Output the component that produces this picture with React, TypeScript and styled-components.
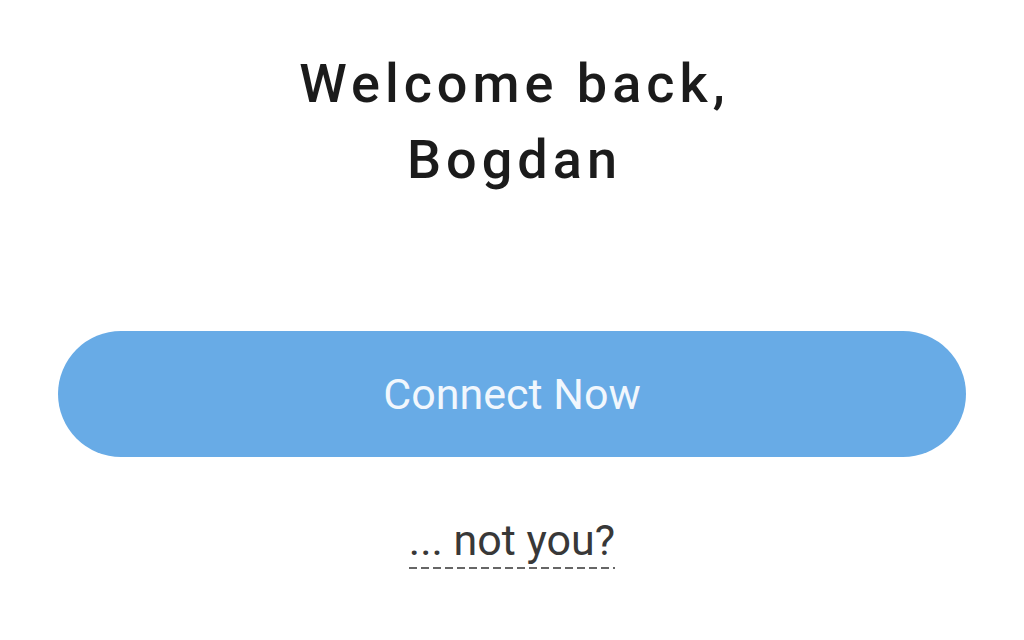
import React from "react";
import styled, { createGlobalStyle } from "styled-components";

const Global = createGlobalStyle`
  html, body { margin: 0; padding: 0; background: #ffffff; }
  body { font-family: Roboto, "Noto Sans", sans-serif; }
`;

const Page = styled.main`
  width: 1024px;
  height: 640px;
  display: flex;
  flex-direction: column;
  align-items: center;
  box-sizing: border-box;
  padding-top: 46px;
`;

const Title = styled.h1`
  margin: 0;
  font-family: Roboto, sans-serif;
  font-weight: 500;
  font-size: 54px;
  line-height: 76px;
  letter-spacing: 5px;
  color: #1b1b1b;
  text-align: center;
  padding-left: 5px;
`;

const ConnectButton = styled.button`
  margin-top: 133px;
  width: 908px;
  height: 126px;
  border: none;
  border-radius: 63px;
  background: #68abe6;
  color: #f1f7fd;
  font-family: Roboto, sans-serif;
  font-size: 43px;
  font-weight: 400;
  cursor: pointer;
`;

const NotYou = styled.a`
  margin-top: 60px;
  font-family: Roboto, sans-serif;
  font-size: 43px;
  line-height: 46px;
  color: #383838;
  text-decoration: none;
  padding-bottom: 6px;
  background-image: repeating-linear-gradient(
    to right,
    #666666 0 8px,
    transparent 8px 12px
  );
  background-size: 100% 2px;
  background-repeat: no-repeat;
  background-position: left bottom;
`;

export default function App() {
  return (
    <>
      <Global />
      <Page>
        <Title>
          Welcome back,
          <br />
          Bogdan
        </Title>
        <ConnectButton>Connect Now</ConnectButton>
        <NotYou href="#">... not you?</NotYou>
      </Page>
    </>
  );
}
